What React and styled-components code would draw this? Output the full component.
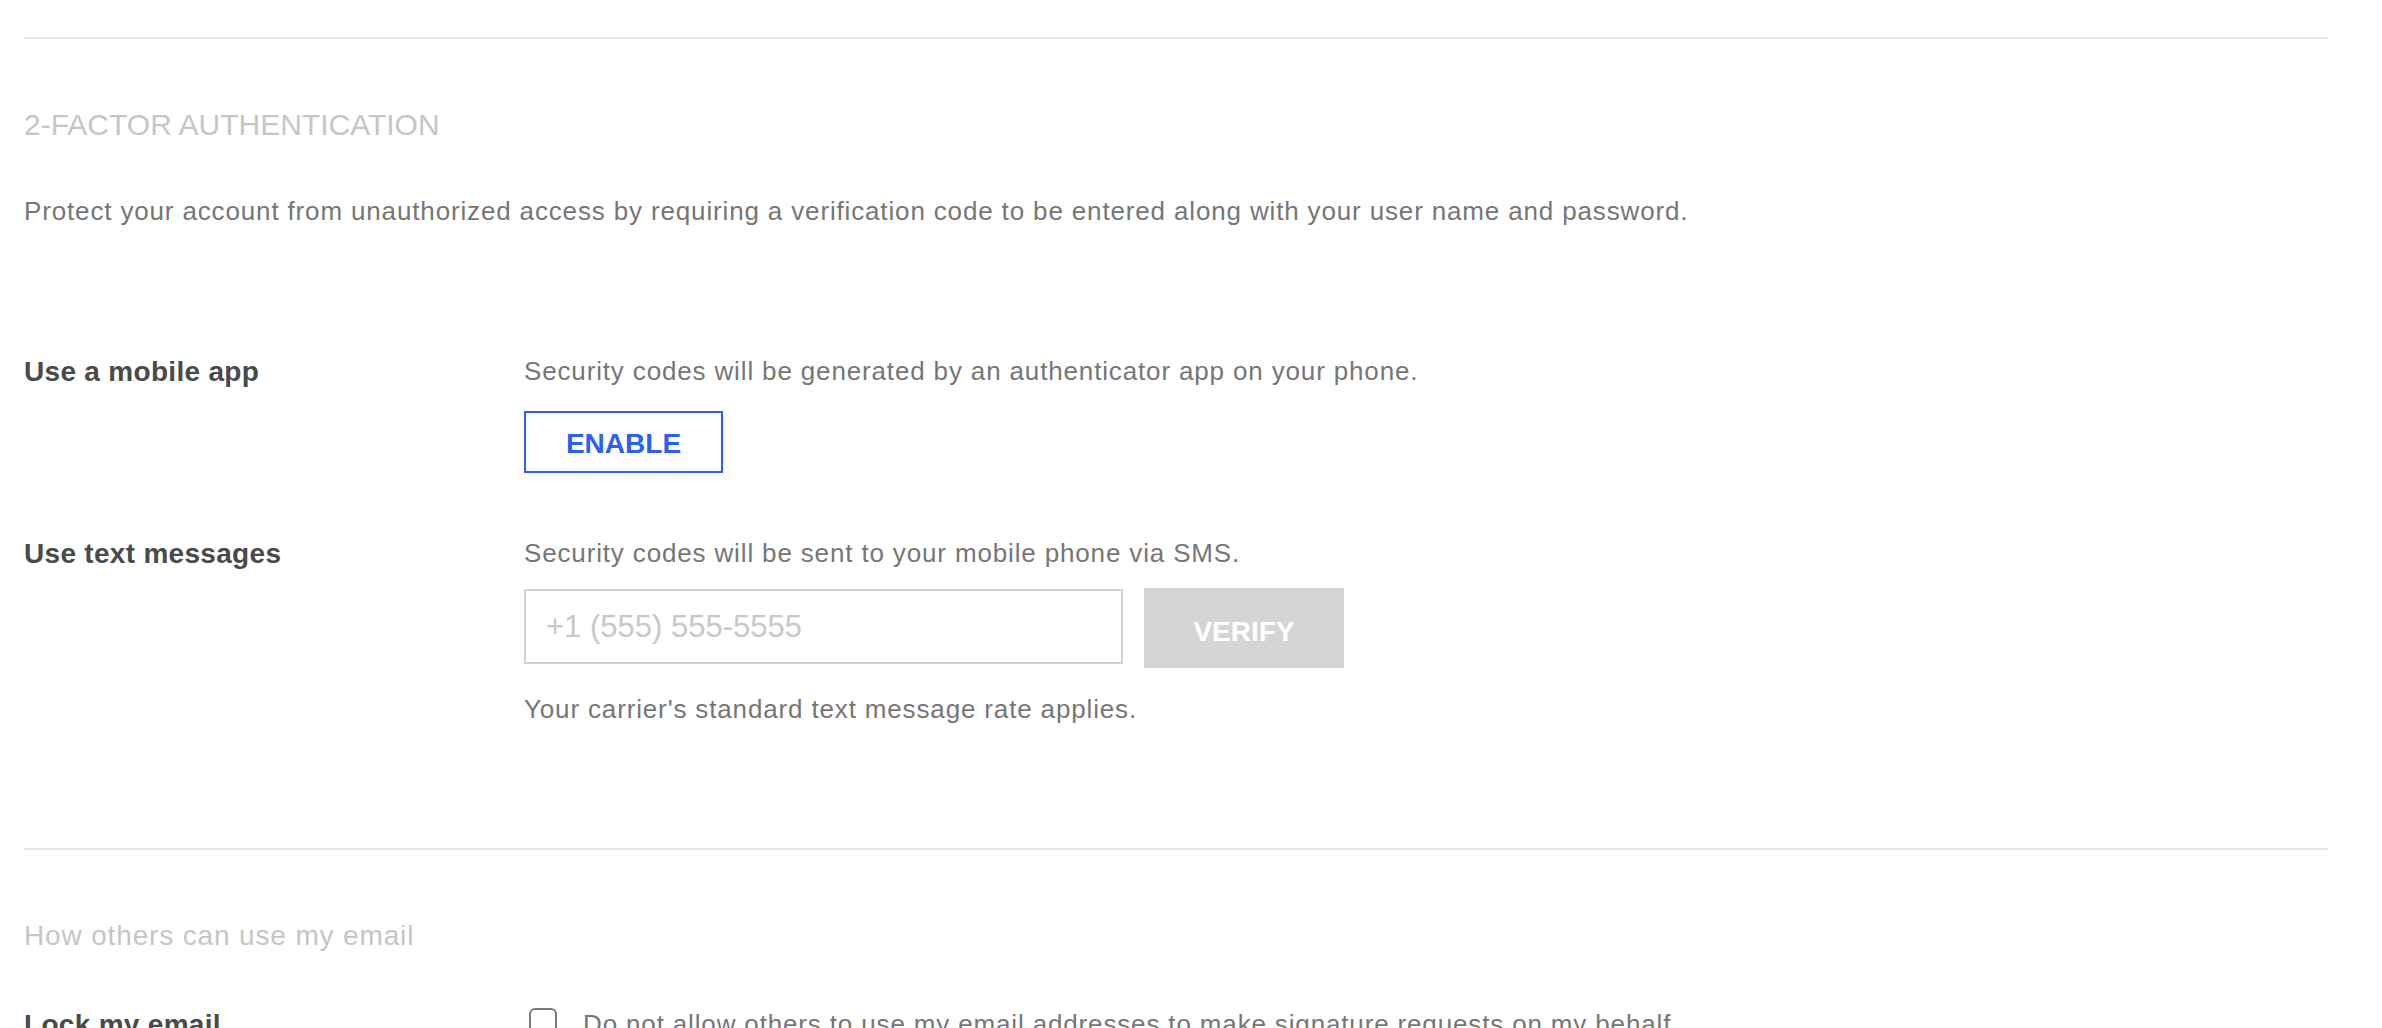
import React, { useState } from "react";
import styled, { createGlobalStyle } from "styled-components";

const GlobalStyle = createGlobalStyle`
  html, body {
    margin: 0;
    padding: 0;
    background: #fff;
  }
  body {
    font-family: "Liberation Sans", Arial, sans-serif;
    -webkit-font-smoothing: antialiased;
  }
`;

const Page = styled.div`
  padding: 37px 54px 0 24px;
`;

const Divider = styled.div`
  height: 2px;
  background-color: #e6e6e6;
  margin-top: ${(props) => props.top || 0}px;
`;

const Section = styled.section`
  display: flex;
  flex-direction: column;
`;

const SectionTitle = styled.h2`
  margin: 68px 0 0;
  font-size: ${(props) => (props.caps ? "30px" : "28px")};
  font-weight: 400;
  line-height: 36px;
  color: #c6c6c6;
  letter-spacing: ${(props) => (props.caps ? "0" : "0.85px")};
  text-transform: ${(props) => (props.caps ? "uppercase" : "none")};
`;

const Intro = styled.p`
  margin: 50px 0 0;
  font-size: 26px;
  line-height: 36px;
  color: #767676;
  letter-spacing: 0.85px;
`;

const Row = styled.div`
  display: grid;
  grid-template-columns: 500px 1fr;
  margin-top: ${(props) => props.gap || 0}px;
`;

const Label = styled.div`
  font-size: 28px;
  font-weight: 700;
  line-height: 36px;
  color: #4a4a4a;
  letter-spacing: 0.3px;
  padding-top: 1px;
`;

const Content = styled.div`
  display: flex;
  flex-direction: column;
  align-items: flex-start;
`;

const Text = styled.p`
  margin: ${(props) => props.top || 0}px 0 0;
  font-size: 26px;
  line-height: 36px;
  color: #767676;
  letter-spacing: 0.85px;
`;

const OutlineButton = styled.button`
  margin-top: 22px;
  width: 199px;
  height: 62px;
  padding: 4px 0 0;
  border: 2px solid #2b5ff5;
  background: #fff;
  color: #2b5ff5;
  font-family: inherit;
  font-size: 28px;
  font-weight: 700;
  cursor: pointer;
`;

const InputRow = styled.div`
  display: flex;
  align-items: flex-start;
  gap: 21px;
  margin-top: 17px;
`;

const PhoneInput = styled.input`
  box-sizing: border-box;
  width: 599px;
  height: 75px;
  margin-top: 1px;
  padding: 0 20px;
  border: 2px solid #d2d2d2;
  font-family: "Liberation Sans", Arial, sans-serif;
  font-size: 31px;
  color: #444;
  outline: none;
  &::placeholder {
    color: #c8c8c8;
  }
`;

const FilledButton = styled.button`
  width: 200px;
  height: 80px;
  border: none;
  background: #d5d5d5;
  color: #fff;
  font-family: inherit;
  font-size: 28px;
  font-weight: 700;
  padding-top: 8px;
`;

const CheckRow = styled.label`
  display: flex;
  align-items: flex-start;
  gap: 26px;
  font-size: 26px;
  line-height: 36px;
  color: #767676;
  letter-spacing: 0.85px;
`;

const Checkbox = styled.input`
  appearance: none;
  box-sizing: border-box;
  width: 28px;
  height: 28px;
  margin: 2px 0 0 5px;
  border: 2px solid #7a7a7a;
  border-radius: 6px;
  background: #fff;
  flex-shrink: 0;
`;

const App = () => {
  const [phone, setPhone] = useState("");
  const [locked, setLocked] = useState(false);

  return (
    <>
      <GlobalStyle />
      <Page>
        <Divider />
        <Section>
          <SectionTitle caps>2-Factor Authentication</SectionTitle>
          <Intro>
            Protect your account from unauthorized access by requiring a
            verification code to be entered along with your user name and
            password.
          </Intro>

          <Row gap={124}>
            <Label>Use a mobile app</Label>
            <Content>
              <Text>
                Security codes will be generated by an authenticator app on
                your phone.
              </Text>
              <OutlineButton>ENABLE</OutlineButton>
            </Content>
          </Row>

          <Row gap={62}>
            <Label>Use text messages</Label>
            <Content>
              <Text>Security codes will be sent to your mobile phone via SMS.</Text>
              <InputRow>
                <PhoneInput
                  placeholder="+1 (555) 555-5555"
                  value={phone}
                  onChange={(e) => setPhone(e.target.value)}
                />
                <FilledButton disabled={!phone}>VERIFY</FilledButton>
              </InputRow>
              <Text top={23}>Your carrier's standard text message rate applies.</Text>
            </Content>
          </Row>
        </Section>

        <Divider top={121} />

        <Section>
          <SectionTitle>How others can use my email</SectionTitle>
          <Row gap={52}>
            <Label>Lock my email</Label>
            <CheckRow>
              <Checkbox
                type="checkbox"
                checked={locked}
                onChange={() => setLocked(!locked)}
              />
              Do not allow others to use my email addresses to make signature
              requests on my behalf
            </CheckRow>
          </Row>
        </Section>
      </Page>
    </>
  );
};

export default App;
